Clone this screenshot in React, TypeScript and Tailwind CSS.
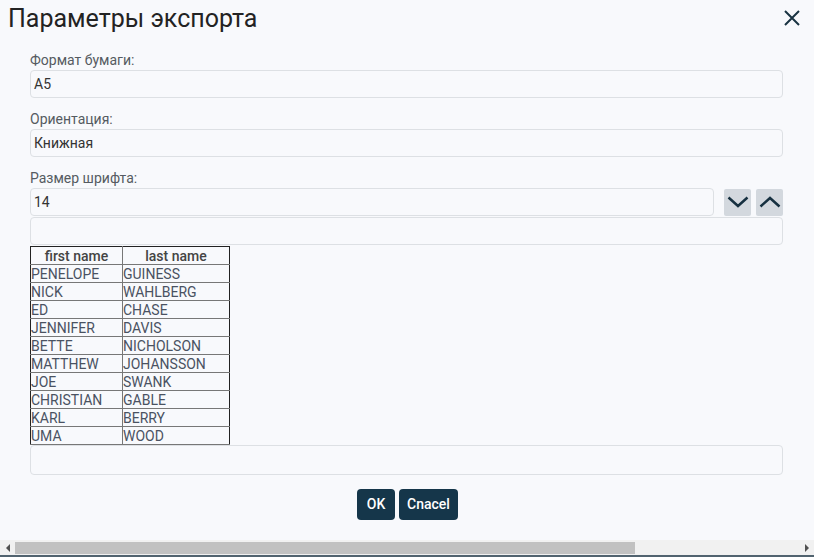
import React from "react";

const rows: [string, string][] = [
  ["PENELOPE", "GUINESS"],
  ["NICK", "WAHLBERG"],
  ["ED", "CHASE"],
  ["JENNIFER", "DAVIS"],
  ["BETTE", "NICHOLSON"],
  ["MATTHEW", "JOHANSSON"],
  ["JOE", "SWANK"],
  ["CHRISTIAN", "GABLE"],
  ["KARL", "BERRY"],
  ["UMA", "WOOD"],
];

function Field({ label, value, children }: { label: string; value: string; children?: React.ReactNode }) {
  return (
    <div className="flex flex-col">
      <div className="h-[19px] leading-[19px] text-[14px] text-[#555b61]">{label}</div>
      <div className="flex items-center">
        <div className="flex-1 h-[28px] border border-[#dde0e4] rounded-[4px] px-[3px] flex items-center text-[14px] text-[#333]">
          {value}
        </div>
        {children}
      </div>
    </div>
  );
}

export default function App() {
  return (
    <div
      className="w-[814px] h-[557px] bg-[#f8f9fc] flex flex-col overflow-hidden"
      style={{ fontFamily: "Roboto, 'Liberation Sans', sans-serif" }}
    >
      <div className="h-[51px] flex items-start justify-between">
        <div className="pl-[8px] pt-[1px] text-[25px] leading-[36px] text-[#232323]">Параметры экспорта</div>
        <svg width="16" height="16" viewBox="0 0 16 16" className="mt-[10px] mr-[14px]">
          <path d="M1 1 L15 15 M15 1 L1 15" stroke="#1a3342" strokeWidth="2" />
        </svg>
      </div>
      <div className="pl-[30px] pr-[31px] flex flex-col">
        <Field label="Формат бумаги:" value="A5" />
        <div className="h-[12px]" />
        <Field label="Ориентация:" value="Книжная" />
        <div className="h-[12px]" />
        <Field label="Размер шрифта:" value="14">
          <div className="ml-[10px] w-[27px] h-[27px] bg-[#d3d8de] rounded-[2px] flex items-center justify-center">
            <svg width="22" height="12" viewBox="0 0 22 12">
              <path d="M1.5 1.5 L11 10 L20.5 1.5" fill="none" stroke="#163040" strokeWidth="2.5" />
            </svg>
          </div>
          <div className="ml-[5px] w-[27px] h-[27px] bg-[#d3d8de] rounded-[2px] flex items-center justify-center">
            <svg width="22" height="12" viewBox="0 0 22 12">
              <path d="M1.5 10.5 L11 2 L20.5 10.5" fill="none" stroke="#163040" strokeWidth="2.5" />
            </svg>
          </div>
        </Field>
        <div className="mt-[1px] h-[28px] border border-[#dde0e4] rounded-[4px]" />
        <div className="mt-[1px]">
          <table className="border-collapse border border-[#222] text-[14px]">
            <thead>
              <tr className="h-[18px]">
                <th className="w-[92px] border border-[#777] border-t-[#222] border-l-[#222] font-medium text-[#444] leading-[16px] p-0">first name</th>
                <th className="w-[107px] border border-[#777] border-t-[#222] border-r-[#222] font-medium text-[#444] leading-[16px] p-0">last name</th>
              </tr>
            </thead>
            <tbody>
              {rows.map(([a, b], i) => (
                <tr key={i} className="h-[18px]">
                  <td className="border border-[#777] border-l-[#222] text-[#4a5262] leading-[16px] p-0">{a}</td>
                  <td className="border border-[#777] border-r-[#222] text-[#4a5262] leading-[16px] p-0">{b}</td>
                </tr>
              ))}
            </tbody>
          </table>
        </div>
        <div className="h-[30px] border border-[#dde0e4] rounded-[4px]" />
        <div className="mt-[14px] flex justify-center gap-[4px] pl-[2px]">
          <div className="w-[38px] h-[31px] bg-[#15364a] rounded-[4px] flex items-center justify-center text-white text-[14px] font-medium">OK</div>
          <div className="w-[59px] h-[31px] bg-[#15364a] rounded-[4px] flex items-center justify-center text-white text-[14px] font-medium">Cnacel</div>
        </div>
      </div>
      <div className="mt-auto h-[15px] bg-[#f1f1f1] flex items-center">
        <div className="w-[15px] flex items-center justify-center">
          <div className="w-0 h-0 border-y-[4px] border-y-transparent border-r-[4px] border-r-[#505050]" />
        </div>
        <div className="w-[620px] h-[12px] bg-[#c1c1c1]" />
        <div className="flex-1" />
        <div className="w-[15px] flex items-center justify-center">
          <div className="w-0 h-0 border-y-[4px] border-y-transparent border-l-[4px] border-l-[#505050]" />
        </div>
      </div>
      <div className="h-[2px] bg-[#51636f]" />
    </div>
  );
}
